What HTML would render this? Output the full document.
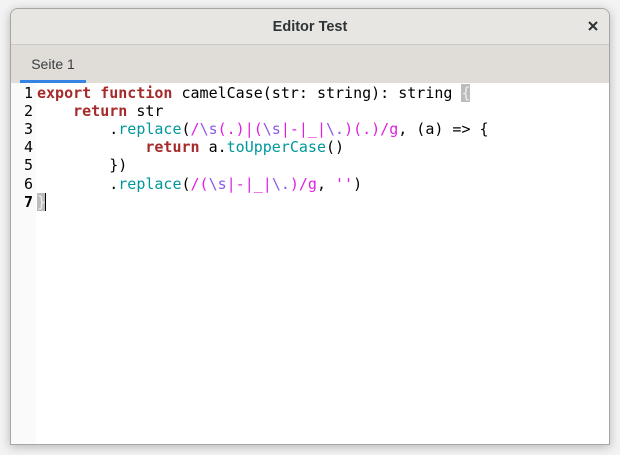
<!DOCTYPE html>
<html><head><meta charset="utf-8"><style>
html,body{margin:0;padding:0;width:620px;height:455px;background:#f3f3f3;overflow:hidden}
.win{position:absolute;left:10px;top:8px;width:598px;height:435px;border:1px solid #a8a6a3;border-radius:8px 8px 0 0;background:#fff;overflow:hidden;box-shadow:0 2px 10px rgba(0,0,0,.25)}
.title{position:absolute;left:0;top:0;width:100%;height:35px;background:#e8e6e3;border-bottom:1px solid #cdc9c5;font:bold 14.5px "Liberation Sans",sans-serif;color:#2e3436;text-align:center;line-height:36px}
.x{position:absolute;right:11px;top:12px;width:10px;height:10px}
.tabs{position:absolute;left:0;top:36px;width:100%;height:38px;background:#e0ddd9}
.tab{position:absolute;left:9px;top:0;width:66px;height:38px;font:14px "Liberation Sans",sans-serif;color:#3a3d3e;text-align:center;line-height:38px}
.tab:after{content:"";position:absolute;left:0;bottom:0;width:66px;height:3px;background:#3584e4}
.gut{position:absolute;left:0;top:74px;width:25px;height:370px;background:#fafafa}
pre{margin:0;position:absolute;top:74.5px;font:15px/18.2px "DejaVu Sans Mono",monospace;color:#000}
.num{left:0;width:22px;text-align:right}
.code{left:26px}
.k{color:#a52a2a;font-weight:bold}.m{color:#00979d}.r{color:#e020e0}.e{color:#8a5ae6}
.b{background:#bcbcbc;color:#eee}
</style></head><body>
<div class="win">
<div class="title">Editor Test<svg class="x" viewBox="0 0 10 10"><path d="M1 1L9 9M9 1L1 9" stroke="#2e3436" stroke-width="2"/></svg></div>
<div class="tabs"><div class="tab">Seite 1</div></div>
<div class="gut"></div>
<pre class="num">1
2
3
4
5
6
<b>7</b></pre>
<pre class="code"><span class="k">export</span> <span class="k">function</span> camelCase(str: string): string <span class="b">{</span>
    <span class="k">return</span> str
        .<span class="m">replace</span>(<span class="r">/</span><span class="e">\s</span><span class="r">(.)|(</span><span class="e">\s</span><span class="r">|-|_|</span><span class="e">\.</span><span class="r">)(.)/g</span>, (a) =&gt; {
            <span class="k">return</span> a.<span class="m">toUpperCase</span>()
        })
        .<span class="m">replace</span>(<span class="r">/(</span><span class="e">\s</span><span class="r">|-|_|</span><span class="e">\.</span><span class="r">)/g</span>, <span class="r">''</span>)
<span class="b">}</span><span style="border-left:1px solid #000;margin-left:-1px"></span></pre>
</div>
</body></html>
